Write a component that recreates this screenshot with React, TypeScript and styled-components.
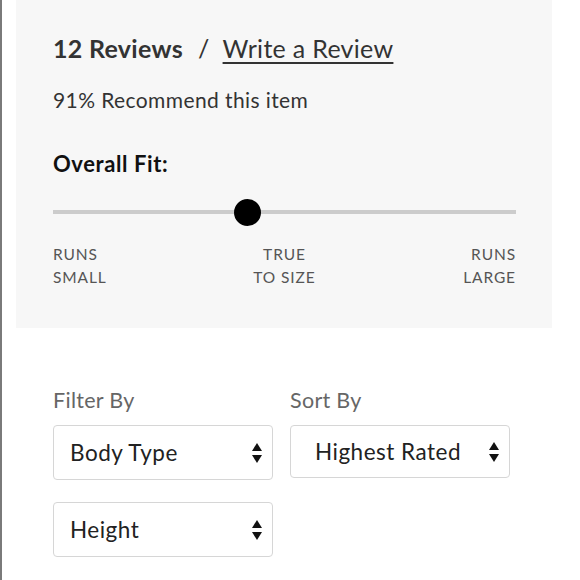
import { FC } from "react";
import styled, { createGlobalStyle } from "styled-components";

const GlobalStyle = createGlobalStyle`
  html, body {
    margin: 0;
    padding: 0;
    background: #ffffff;
  }
  body {
    font-family: Lato, "Open Sans", sans-serif;
    color: #333333;
  }
`;

const Page = styled.div`
  width: 580px;
  height: 580px;
  box-sizing: border-box;
  border-left: 2px solid #7a7a7a;
  padding-left: 14px;
  overflow: hidden;
`;

const Summary = styled.section`
  width: 536px;
  height: 328px;
  box-sizing: border-box;
  background-color: #f7f7f7;
  padding: 33px 36px 0 37px;
`;

const Heading = styled.div`
  display: flex;
  align-items: baseline;
  font-size: 25px;
  line-height: 30px;
  letter-spacing: 0.3px;
  color: #333333;
`;

const Count = styled.span`
  font-weight: 700;
`;

const Slash = styled.span`
  margin: 0 13px 0 15px;
`;

const WriteLink = styled.a`
  color: #333333;
  text-decoration: underline;
  text-decoration-thickness: 2px;
  text-underline-offset: 4px;
`;

const Recommend = styled.p`
  margin: 24px 0 0;
  font-size: 21px;
  line-height: 26px;
  letter-spacing: 0.4px;
  color: #333333;
`;

const FitTitle = styled.h3`
  margin: 38px 0 0;
  font-size: 22px;
  line-height: 26px;
  font-weight: 700;
  letter-spacing: 0.6px;
  color: #111111;
`;

const Track = styled.div`
  position: relative;
  margin-top: 33px;
  width: 463px;
  height: 4px;
  background-color: #cccccc;
`;

const Thumb = styled.div`
  position: absolute;
  top: -11px;
  width: 27px;
  height: 27px;
  margin-left: -13px;
  border-radius: 50%;
  background-color: #000000;
`;

const Labels = styled.div`
  display: grid;
  grid-template-columns: 1fr 1fr 1fr;
  width: 463px;
  margin-top: 29px;
  font-size: 15.5px;
  line-height: 23px;
  letter-spacing: 0.9px;
  color: #555555;
`;

const Label = styled.div<{ $align: "left" | "center" | "right" }>`
  text-align: ${(p) => p.$align};
`;

const Controls = styled.div`
  display: grid;
  grid-template-columns: 220px 220px;
  column-gap: 17px;
  row-gap: 22px;
  padding: 59px 0 0 37px;
`;

const Field = styled.div`
  display: flex;
  flex-direction: column;
  gap: 12px;
`;

const FieldLabel = styled.div`
  font-size: 21.5px;
  line-height: 26px;
  letter-spacing: 0.3px;
  color: #666666;
`;

const SelectBox = styled.div<{ $indent?: number; $height?: number }>`
  display: flex;
  align-items: center;
  justify-content: space-between;
  box-sizing: border-box;
  height: ${(p) => p.$height ?? 55}px;
  padding: 0 9px 0 ${(p) => p.$indent ?? 16}px;
  border: 1px solid #d6d6d6;
  border-radius: 4px;
  background: #ffffff;
  font-size: 22.5px;
  letter-spacing: 0.5px;
  color: #222222;
`;

const Spacer = styled.div`
  height: 24px;
`;

const Arrows: FC = () => (
  <svg width="12" height="22" viewBox="0 0 12 22">
    <path d="M6 1 L11 9 L1 9 Z" fill="#111" />
    <path d="M6 21 L11 13 L1 13 Z" fill="#111" />
  </svg>
);

type SelectProps = { value: string; indent?: number; height?: number };

const Select: FC<SelectProps> = ({ value, indent, height }) => (
  <SelectBox $indent={indent} $height={height}>
    <span>{value}</span>
    <Arrows />
  </SelectBox>
);

const App: FC = () => {
  const fit = 0.42;
  return (
    <Page>
      <GlobalStyle />
      <Summary>
        <Heading>
          <Count>12 Reviews</Count>
          <Slash>/</Slash>
          <WriteLink href="#">Write a Review</WriteLink>
        </Heading>
        <Recommend>91% Recommend this item</Recommend>
        <FitTitle>Overall Fit:</FitTitle>
        <Track>
          <Thumb style={{ left: `${fit * 100}%` }} />
        </Track>
        <Labels>
          <Label $align="left">RUNS<br />SMALL</Label>
          <Label $align="center">TRUE<br />TO SIZE</Label>
          <Label $align="right">RUNS<br />LARGE</Label>
        </Labels>
      </Summary>
      <Controls>
        <Field>
          <FieldLabel>Filter By</FieldLabel>
          <Select value="Body Type" />
        </Field>
        <Field>
          <FieldLabel>Sort By</FieldLabel>
          <Select value="Highest Rated" indent={24} height={53} />
        </Field>
        <Field>
          <Select value="Height" />
        </Field>
        <Spacer />
      </Controls>
    </Page>
  );
};

export default App;
